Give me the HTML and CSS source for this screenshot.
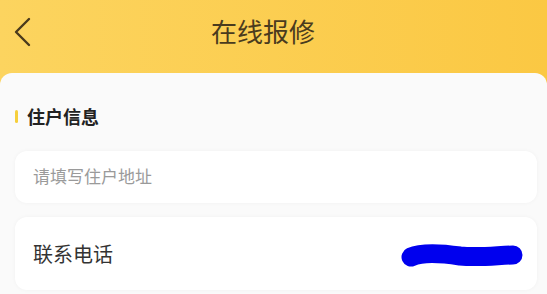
FILE: index.html
```html
<html>
    <head>
        <title>在线报修</title>
        <meta name="viewport" content="initial-scale=1.0">
        <link rel="stylesheet" href="styles.css">
    </head>
    <body>
        <div class="header">
            <div class="back">
                <svg width="20" height="32" viewBox="0 0 20 32"><polyline points="16,3 3,16 16,29" fill="none" stroke="#4a3a1c" stroke-width="2.4" stroke-linecap="round" stroke-linejoin="round"/></svg>
            </div>
            <div class="title">在线报修</div>
        </div>
        <div class="panel">
            <div class="section-title"><span class="mark"></span>住户信息</div>
            <div class="card input-card">
                <span class="placeholder">请填写住户地址</span>
            </div>
            <div class="card row-card">
                <span class="label">联系电话</span>
                <svg class="scribble" width="124" height="28" viewBox="0 0 124 28"><path d="M11,17 C22,12 40,13 60,16 C80,18 100,15 113,15" fill="none" stroke="#0000ee" stroke-width="19" stroke-linecap="round"/></svg>
            </div>
        </div>
    </body>
</html>
```

FILE: styles.css
```css
body {
    margin: 0;
    background: linear-gradient(90deg, #fcd45f, #fbc843);
    font-family: "Noto Sans CJK SC", "Noto Sans", sans-serif;
}
.header {
    height: 73px;
    display: flex;
    align-items: center;
    justify-content: center;
    position: relative;
}
.back {
    position: absolute;
    left: 13px;
    top: 16px;
}
.title {
    font-size: 26px;
    color: #4a3b1e;
    margin-top: -13px;
    margin-right: 21px;
}
.panel {
    background-color: #fafafa;
    border-radius: 12px 12px 0 0;
    padding: 31px 10px 0 15px;
    height: 221px;
    box-sizing: border-box;
}
.section-title {
    display: flex;
    align-items: center;
    font-size: 18px;
    font-weight: bold;
    color: #222;
    line-height: 24px;
}
.mark {
    width: 3px;
    height: 13px;
    border-radius: 2px;
    background-color: #f6cf3c;
    margin-right: 9px;
}
.card {
    background-color: #fff;
    border-radius: 12px;
    box-shadow: 0 0 4px rgba(0, 0, 0, 0.04);
    display: flex;
    align-items: center;
    padding: 0 13px 0 18px;
}
.input-card {
    height: 52px;
    margin-top: 23px;
}
.placeholder {
    font-size: 17px;
    color: #9a9a9a;
    margin-top: -3px;
}
.row-card {
    height: 73px;
    margin-top: 14px;
    justify-content: space-between;
}
.label {
    font-size: 20px;
    color: #333;
    margin-top: -1px;
}
```
